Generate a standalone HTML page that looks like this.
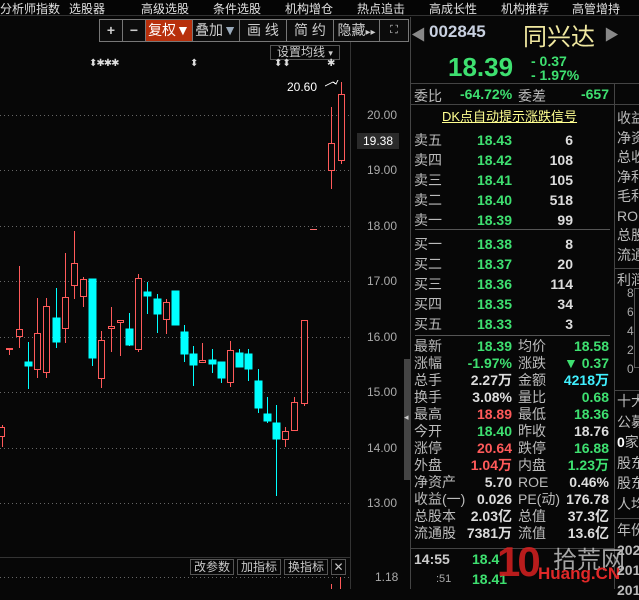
<!DOCTYPE html>
<html><head><meta charset="utf-8"><style>
*{margin:0;padding:0;box-sizing:border-box}
body{width:639px;height:589px;background:#070707;overflow:hidden;position:relative;font-family:"Liberation Sans","Noto Sans CJK SC",sans-serif;color:#c8c8c8}
.a{position:absolute;white-space:nowrap}
.m{font-size:12px;color:#e0e0e0;top:0}
.tb{position:absolute;top:19px;height:23px;border:1px solid #777;font-size:14px;color:#ccc;text-align:center;line-height:21px;background:#0c0c0c}
.lb{font-size:14px;color:#bbb}
.g{color:#3ee070;font-weight:bold;font-size:14px}
.w{color:#ddd;font-weight:bold;font-size:14px}
.r{color:#ff5a5a;font-weight:bold;font-size:14px}
.c{color:#40f0ff;font-weight:bold;font-size:14px}
.ax{font-size:12px;color:#aaa}
.rt{text-align:right}
</style></head><body>
<!-- top menu -->
<div class="a" style="left:0;top:0;width:639px;height:16px;background:#050505;border-bottom:1px solid #333"></div>
<div class="a m" style="left:0">分析师指数</div>
<div class="a m" style="left:69px">选股器</div>
<div class="a m" style="left:141px">高级选股</div>
<div class="a m" style="left:213px">条件选股</div>
<div class="a m" style="left:285px">机构增仓</div>
<div class="a m" style="left:357px">热点追击</div>
<div class="a m" style="left:429px">高成长性</div>
<div class="a m" style="left:501px">机构推荐</div>
<div class="a m" style="left:572px">高管增持</div>
<!-- toolbar -->
<div class="tb" style="left:99px;width:24px;font-weight:bold">+</div>
<div class="tb" style="left:122px;width:24px;font-weight:bold">−</div>
<div class="tb" style="left:145px;width:48px;background:#b8300c;color:#fff">复权▼</div>
<div class="tb" style="left:192px;width:48px">叠加<span style="color:#9ab">▼</span></div>
<div class="tb" style="left:239px;width:48px">画 线</div>
<div class="tb" style="left:286px;width:48px">简 约</div>
<div class="tb" style="left:333px;width:47px">隐藏<span style="font-size:10px">▸▸</span></div>
<div class="tb" style="left:379px;width:30px;font-size:11px">⛶</div>
<!-- chart -->
<div class="a" style="left:350px;top:42px;width:1px;height:547px;background:#333"></div>
<div class="a" style="left:0;top:557px;width:351px;height:1px;background:#333"></div>
<div class="a" style="left:404px;top:359px;width:6px;height:121px;background:#444"></div>
<div class="a" style="left:404px;top:412px;font-size:9px;color:#ccc">◂</div>
<div class="a" style="left:270px;top:45px;width:70px;height:15px;border:1px solid #555;font-size:12px;line-height:13px;color:#ccc;padding-left:6px">设置均线 <span style="font-size:9px">▾</span></div>
<div class="a" style="top:58px;left:89px;font-size:10px;color:#ddd;letter-spacing:-1px">⬍✱✱✱</div>
<div class="a" style="top:58px;left:190px;font-size:10px;color:#ddd">⬍</div>
<div class="a" style="top:58px;left:274px;font-size:10px;color:#ddd">⬍⬍</div>
<div class="a" style="top:58px;left:327px;font-size:10px;color:#ddd">✱</div>
<div class="a" style="top:80px;left:287px;font-size:12px;color:#fff">20.60</div>
<svg class="a" style="left:0;top:0" width="410" height="589" shape-rendering="crispEdges">
<g stroke="#666" stroke-dasharray="1 3">
<line x1="0" y1="115.5" x2="350" y2="115.5"/><line x1="0" y1="170.5" x2="350" y2="170.5"/><line x1="0" y1="226.5" x2="350" y2="226.5"/><line x1="0" y1="281.5" x2="350" y2="281.5"/><line x1="0" y1="337.5" x2="350" y2="337.5"/><line x1="0" y1="392.5" x2="350" y2="392.5"/><line x1="0" y1="448.5" x2="350" y2="448.5"/><line x1="0" y1="503.5" x2="350" y2="503.5"/><line x1="0" y1="577.5" x2="350" y2="577.5"/>
</g>
<polyline points="325,86 333,82 336,84 338,80" stroke="#fff" fill="none"/>
<line x1="310" y1="229.5" x2="317" y2="229.5" stroke="#ff7070"/>
<g stroke="#ff5a5a" fill="#070707">
<line x1="2.5" y1="425" x2="2.5" y2="447"/><rect x="-1.5" y="427.5" width="6" height="9"/>
<line x1="9.5" y1="348" x2="9.5" y2="355"/><rect x="6.5" y="348.5" width="6" height="1"/>
<line x1="19.5" y1="266" x2="19.5" y2="348"/><rect x="16.5" y="329.5" width="6" height="7"/>
<line x1="37.5" y1="298" x2="37.5" y2="378"/><rect x="34.5" y="333.5" width="6" height="36"/>
<line x1="46.5" y1="298" x2="46.5" y2="378"/><rect x="43.5" y="306.5" width="6" height="66"/>
<line x1="65.5" y1="253" x2="65.5" y2="343"/><rect x="62.5" y="297.5" width="6" height="31"/>
<line x1="74.5" y1="231" x2="74.5" y2="299"/><rect x="71.5" y="263.5" width="6" height="22"/>
<line x1="83.5" y1="277" x2="83.5" y2="307"/><rect x="80.5" y="279.5" width="6" height="17"/>
<line x1="101.5" y1="331" x2="101.5" y2="388"/><rect x="98.5" y="340.5" width="6" height="38"/>
<line x1="111.5" y1="307" x2="111.5" y2="352"/><rect x="108.5" y="326.5" width="6" height="2"/>
<line x1="120.5" y1="320" x2="120.5" y2="356"/><rect x="117.5" y="320.5" width="6" height="2"/>
<line x1="138.5" y1="274" x2="138.5" y2="352"/><rect x="135.5" y="278.5" width="6" height="71"/>
<line x1="166.5" y1="299" x2="166.5" y2="334"/><rect x="163.5" y="302.5" width="6" height="17"/>
<line x1="202.5" y1="343" x2="202.5" y2="362"/><rect x="199.5" y="360.5" width="6" height="2"/>
<line x1="230.5" y1="341" x2="230.5" y2="387"/><rect x="227.5" y="350.5" width="6" height="32"/>
<line x1="285.5" y1="427" x2="285.5" y2="447"/><rect x="282.5" y="431.5" width="6" height="8"/>
<line x1="294.5" y1="397" x2="294.5" y2="430"/><rect x="291.5" y="402.5" width="6" height="28"/>
<line x1="304.5" y1="320" x2="304.5" y2="406"/><rect x="301.5" y="320.5" width="6" height="83"/>
<line x1="331.5" y1="107" x2="331.5" y2="189"/><rect x="328.5" y="143.5" width="6" height="27"/>
<line x1="341.5" y1="82" x2="341.5" y2="164"/><rect x="338.5" y="94.5" width="6" height="66"/>
<line x1="331.5" y1="584" x2="331.5" y2="589"/><line x1="340.5" y1="577" x2="340.5" y2="589"/>
</g>
<g stroke="#00ffff" fill="#00ffff">
<line x1="28.5" y1="342" x2="28.5" y2="389"/><rect x="25" y="362" width="7" height="4"/>
<line x1="56.5" y1="288" x2="56.5" y2="348"/><rect x="53" y="318" width="7" height="24"/>
<line x1="92.5" y1="279" x2="92.5" y2="366"/><rect x="89" y="279" width="7" height="79"/>
<line x1="129.5" y1="313" x2="129.5" y2="346"/><rect x="126" y="329" width="7" height="16"/>
<line x1="147.5" y1="282" x2="147.5" y2="314"/><rect x="144" y="292" width="7" height="4"/>
<line x1="157.5" y1="294" x2="157.5" y2="333"/><rect x="154" y="299" width="7" height="15"/>
<rect x="172" y="291" width="7" height="34"/>
<line x1="184.5" y1="325" x2="184.5" y2="362"/><rect x="181" y="332" width="7" height="22"/>
<line x1="193.5" y1="346" x2="193.5" y2="386"/><rect x="190" y="354" width="7" height="11"/>
<line x1="212.5" y1="349" x2="212.5" y2="373"/><rect x="209" y="360" width="7" height="4"/>
<line x1="221.5" y1="362" x2="221.5" y2="383"/><rect x="218" y="362" width="7" height="16"/>
<line x1="239.5" y1="349" x2="239.5" y2="367"/><rect x="236" y="353" width="7" height="14"/>
<line x1="248.5" y1="349" x2="248.5" y2="381"/><rect x="245" y="354" width="7" height="15"/>
<line x1="258.5" y1="369" x2="258.5" y2="413"/><rect x="255" y="381" width="7" height="27"/>
<line x1="267.5" y1="397" x2="267.5" y2="423"/><rect x="264" y="414" width="7" height="7"/>
<line x1="276.5" y1="405" x2="276.5" y2="496"/><rect x="273" y="423" width="7" height="16"/>
</g>
</svg>
<div class="a ax" style="left:367px;top:108px">20.00</div>
<div class="a" style="left:357px;top:133px;width:42px;height:16px;background:#2a2a2a;color:#fff;font-size:12px;text-align:center;line-height:16px">19.38</div>
<div class="a ax" style="left:367px;top:163px">19.00</div>
<div class="a ax" style="left:367px;top:219px">18.00</div>
<div class="a ax" style="left:367px;top:274px">17.00</div>
<div class="a ax" style="left:367px;top:330px">16.00</div>
<div class="a ax" style="left:367px;top:385px">15.00</div>
<div class="a ax" style="left:367px;top:441px">14.00</div>
<div class="a ax" style="left:367px;top:496px">13.00</div>
<div class="a ax" style="left:375px;top:570px">1.18</div>
<div class="a" style="left:190px;top:559px;width:44px;height:16px;border:1px solid #555;font-size:12px;line-height:14px;text-align:center">改参数</div>
<div class="a" style="left:237px;top:559px;width:44px;height:16px;border:1px solid #555;font-size:12px;line-height:14px;text-align:center">加指标</div>
<div class="a" style="left:284px;top:559px;width:44px;height:16px;border:1px solid #555;font-size:12px;line-height:14px;text-align:center">换指标</div>
<div class="a" style="left:331px;top:559px;width:15px;height:16px;border:1px solid #555;font-size:12px;line-height:14px;text-align:center">✕</div>
<!-- right panel -->
<div class="a" style="left:410px;top:17px;width:1px;height:572px;background:#444"></div>
<div class="a" style="left:410px;top:83px;width:229px;height:1px;background:#444"></div>
<div class="a" style="left:410px;top:104px;width:229px;height:1px;background:#444"></div>
<div class="a" style="left:614px;top:84px;width:1px;height:505px;background:#444"></div>
<div class="a" style="left:415px;top:229px;width:195px;height:1px;background:#555"></div>
<div class="a" style="left:415px;top:335px;width:195px;height:1px;background:#555"></div>
<div class="a" style="left:410px;top:548px;width:204px;height:1px;background:#444"></div>
<div class="a" style="left:411px;top:24px;color:#888;font-size:15px">◀</div>
<div class="a" style="left:429px;top:22px;color:#c8d0e0;font-size:17px;font-weight:bold">002845</div>
<div class="a" style="left:523px;top:17px;color:#f0e8a0;font-size:24px">同兴达</div>
<div class="a" style="left:604px;top:24px;color:#888;font-size:15px">▶</div>
<div class="a" style="left:448px;top:52px;color:#3ee070;font-size:26px;font-weight:bold">18.39</div>
<div class="a g" style="left:531px;top:53px">- 0.37</div>
<div class="a g" style="left:531px;top:67px">- 1.97%</div>
<div class="a lb" style="left:414px;top:86px">委比</div>
<div class="a g" style="left:460px;top:86px">-64.72%</div>
<div class="a lb" style="left:518px;top:86px">委差</div>
<div class="a g rt" style="left:560px;top:86px;width:49px">-657</div>
<div class="a" style="left:442px;top:106px;color:#ffff90;font-size:13px;text-decoration:underline">DK点自动提示涨跌信号</div>
<div class="a lb" style="left:414px;top:130px;line-height:20px">卖五<br>卖四<br>卖三<br>卖二<br>卖一</div>
<div class="a g rt" style="left:460px;top:130px;width:52px;line-height:20px">18.43<br>18.42<br>18.41<br>18.40<br>18.39</div>
<div class="a w rt" style="left:530px;top:130px;width:43px;line-height:20px">6<br>108<br>105<br>518<br>99</div>
<div class="a lb" style="left:414px;top:234px;line-height:20px">买一<br>买二<br>买三<br>买四<br>买五</div>
<div class="a g rt" style="left:460px;top:234px;width:52px;line-height:20px">18.38<br>18.37<br>18.36<br>18.35<br>18.33</div>
<div class="a w rt" style="left:530px;top:234px;width:43px;line-height:20px">8<br>20<br>114<br>34<br>3</div>
<div class="a lb" style="left:414px;top:338px;line-height:17px">最新<br>涨幅<br>总手<br>换手<br>最高<br>今开<br>涨停<br>外盘<br>净资产<br>收益(一)<br>总股本<br>流通股</div>
<div class="a rt" style="left:455px;top:338px;width:57px;line-height:17px;font-size:14px;font-weight:bold;color:#ddd"><span style="color:#3ee070">18.39</span><br><span style="color:#3ee070">-1.97%</span><br>2.27万<br>3.08%<br><span style="color:#ff5a5a">18.89</span><br><span style="color:#3ee070">18.40</span><br><span style="color:#ff5a5a">20.64</span><br><span style="color:#ff5a5a">1.04万</span><br>5.70<br>0.026<br>2.03亿<br>7381万</div>
<div class="a lb" style="left:518px;top:338px;line-height:17px">均价<br>涨跌<br>金额<br>量比<br>最低<br>昨收<br>跌停<br>内盘<br>ROE<br>PE(动)<br>总值<br>流值</div>
<div class="a rt" style="left:550px;top:338px;width:59px;line-height:17px;font-size:14px;font-weight:bold;color:#ddd"><span style="color:#3ee070">18.58</span><br><span style="color:#3ee070">▼ 0.37</span><br><span style="color:#40f0ff">4218万</span><br><span style="color:#3ee070">0.68</span><br><span style="color:#3ee070">18.36</span><br>18.76<br><span style="color:#3ee070">16.88</span><br><span style="color:#3ee070">1.23万</span><br>0.46%<br>176.78<br>37.3亿<br>13.6亿</div>
<div class="a w" style="left:414px;top:551px;color:#ccc">14:55</div>
<div class="a g" style="left:472px;top:551px">18.4</div>
<div class="a" style="left:436px;top:573px;font-size:11px;color:#aaa">:51</div>
<div class="a g" style="left:472px;top:571px">18.41</div>
<!-- watermark -->
<div class="a" style="left:497px;top:538px;font-size:42px;font-weight:bold;color:#d82020;opacity:.85;letter-spacing:-3px">10</div>
<div class="a" style="left:553px;top:540px;font-size:24px;color:#ccc;opacity:.8">拾荒网</div>
<div class="a" style="left:538px;top:564px;font-size:17px;font-weight:bold;color:#e02828">Huang.CN</div>
<!-- far right column -->
<div class="a lb" style="left:617px;top:109px;line-height:19.5px;font-size:14px">收益<br>净资<br>总收<br>净利<br>毛利<br>ROE<br>总股<br>流通</div>
<div class="a" style="left:614px;top:268px;width:25px;height:1px;background:#444"></div>
<div class="a lb" style="left:617px;top:270px">利润</div>
<div class="a ax" style="left:627px;top:284px;line-height:19px">8<br>6<br>4<br>2<br>0</div>
<div class="a" style="left:634px;top:288px;width:5px;height:80px;border-left:1px solid #555;border-top:1px solid #555;border-bottom:1px solid #555"></div>
<div class="a" style="left:614px;top:390px;width:25px;height:1px;background:#444"></div>
<div class="a lb" style="left:617px;top:391px;line-height:20.5px">十大<br>公募<br><b style="color:#fff">0</b>家<br>股东<br>股东<br>人均</div>
<div class="a" style="left:614px;top:518px;width:25px;height:1px;background:#444"></div>
<div class="a lb" style="left:617px;top:520px;line-height:20px">年份<br><b>202</b><br><b>201</b><br><b>201</b></div>
</body></html>
